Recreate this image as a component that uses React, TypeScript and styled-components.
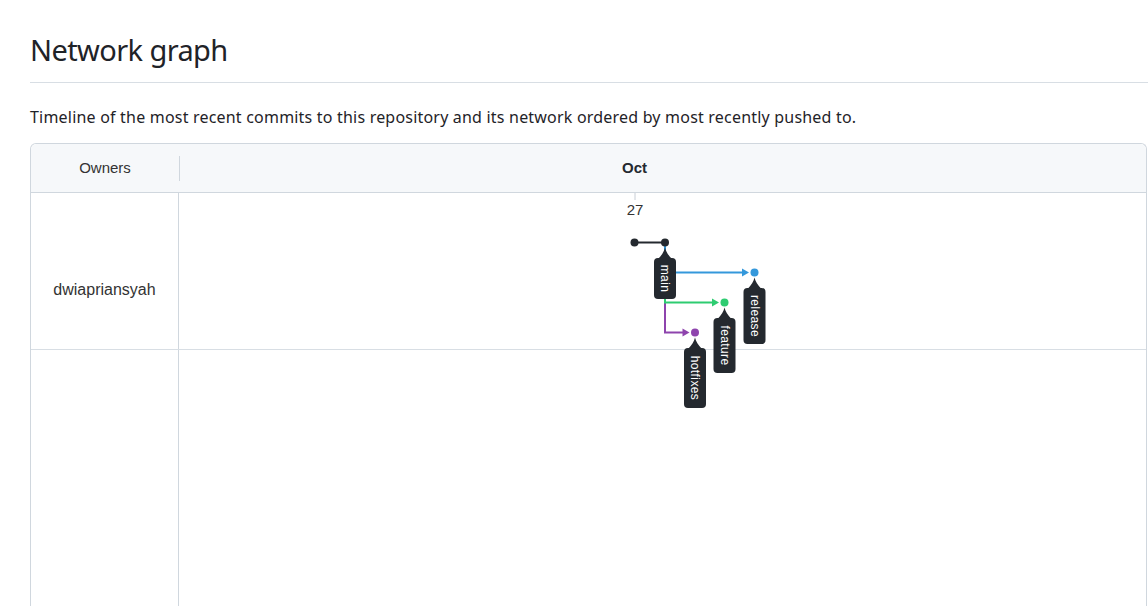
import React from "react";
import styled, { createGlobalStyle } from "styled-components";

const Global = createGlobalStyle`
  html, body { margin: 0; padding: 0; background: #ffffff; }
  body { font-family: "Noto Sans", "Liberation Sans", sans-serif; color: #1f2328; overflow: hidden; }
`;

const Page = styled.div`
  padding: 30px 0 0 30px;
  width: 1148px;
  box-sizing: border-box;
`;

const Title = styled.h1`
  margin: 0;
  font-family: "Noto Sans", sans-serif;
  font-size: 29px;
  letter-spacing: -0.6px;
  font-weight: 400;
  line-height: 40px;
  padding-bottom: 12px;
  border-bottom: 1px solid #d8dee4;
  color: #1f2328;
`;

const Lead = styled.p`
  margin: 22px 0 14px;
  font-family: "Noto Sans", sans-serif;
  font-size: 16px;
  letter-spacing: 0.2px;
  line-height: 24px;
  color: #1f2328;
`;

const Table = styled.div`
  margin-right: 1px;
  border: 1px solid #d0d7de;
  border-bottom: none;
  border-radius: 6px 6px 0 0;
  font-family: "Liberation Sans", Arial, sans-serif;
  color: #333333;
`;

const Header = styled.div`
  display: grid;
  grid-template-columns: 148px 1fr;
  height: 48px;
  background: #f6f8fa;
  border-bottom: 1px solid #d0d7de;
  border-radius: 6px 6px 0 0;
`;

const HeadCell = styled.div<{ $pad?: number }>`
  display: flex;
  align-items: center;
  justify-content: ${(p) => (p.$pad !== undefined ? "flex-start" : "center")};
  padding-left: ${(p) => p.$pad ?? 0}px;
  font-size: 15px;
  line-height: 20px;
  position: relative;
`;

const HeadDivider = styled.span`
  position: absolute;
  right: -1px;
  top: 12px;
  width: 1px;
  height: 25px;
  background: #d0d7de;
`;

const Month = styled.span`
  font-weight: 700;
  color: #24292f;
`;

const Body = styled.div`
  position: relative;
`;

const Row = styled.div<{ $height: number; $last?: boolean }>`
  display: grid;
  grid-template-columns: 148px 1fr;
  height: ${(p) => p.$height}px;
  border-bottom: ${(p) => (p.$last ? "none" : "1px solid #d8dee4")};
`;

const OwnerCell = styled.div<{ $top?: number }>`
  border-right: 1px solid #d0d7de;
  display: flex;
  justify-content: center;
  align-items: flex-start;
  padding-top: ${(p) => p.$top ?? 0}px;
  font-size: 16px;
  line-height: 20px;
  color: #333333;
`;

const GraphCell = styled.div``;

const GraphLayer = styled.svg`
  position: absolute;
  left: 149px;
  top: 0;
  overflow: visible;
  pointer-events: none;
`;

type Branch = { name: string; color: string; x: number; y: number; h: number };

const MAIN_X = 485;
const ROOT_Y = 49.5;

const branches: Branch[] = [
  { name: "hotfixes", color: "#8e44ad", x: 515, y: 139.5, h: 60 },
  { name: "feature", color: "#2ecc71", x: 544.5, y: 109.5, h: 55 },
  { name: "release", color: "#3498db", x: 574.5, y: 79.5, h: 56 },
];

const LABEL_BG = "#24292f";

function Label({ x, y, h, text }: { x: number; y: number; h: number; text: string }) {
  const top = y + 15.5;
  const tip = y + 5;
  return (
    <g>
      <path
        d={`M${x} ${tip} C${x + 1} ${tip + 4} ${x + 3} ${top - 3} ${x + 7} ${top + 1} L${x - 7} ${top + 1} C${x - 3} ${top - 3} ${x - 1} ${tip + 4} ${x} ${tip} Z`}
        fill={LABEL_BG}
      />
      <rect x={x - 11} y={top} width={22} height={h} rx={4} fill={LABEL_BG} />
      <text
        x={0}
        y={0}
        transform={`translate(${x} ${top + h / 2}) rotate(90)`}
        textAnchor="middle"
        dominantBaseline="central"
        fill="#ffffff"
        fontFamily="'Liberation Sans', Arial, sans-serif"
        fontSize={12}
        letterSpacing={0.4}
      >
        {text}
      </text>
    </g>
  );
}

function Graph() {
  return (
    <GraphLayer width={968} height={260}>
      <line x1={455} y1={0} x2={455} y2={7} stroke="#c8ced6" strokeWidth={1} />
      <text
        x={455}
        y={22}
        textAnchor="middle"
        fontFamily="'Liberation Sans', Arial, sans-serif"
        fontSize={15}
        fill="#333333"
      >
        27
      </text>
      {branches.map((b) => (
        <g key={b.name}>
          <path
            d={`M${MAIN_X} ${ROOT_Y} V${b.y} H${b.x - 12}`}
            fill="none"
            stroke={b.color}
            strokeWidth={2}
          />
          <path
            d={`M${b.x - 12.5} ${b.y - 4} L${b.x - 5.5} ${b.y} L${b.x - 12.5} ${b.y + 4} Z`}
            fill={b.color}
          />
          <circle cx={b.x} cy={b.y} r={4} fill={b.color} />
        </g>
      ))}
      <line x1={454.5} y1={ROOT_Y} x2={MAIN_X} y2={ROOT_Y} stroke="#24292f" strokeWidth={2} />
      <circle cx={454.5} cy={ROOT_Y} r={4} fill="#24292f" />
      <circle cx={MAIN_X} cy={ROOT_Y} r={4} fill="#24292f" />
      <Label x={MAIN_X} y={ROOT_Y} h={41} text="main" />
      {branches.map((b) => (
        <Label key={b.name} x={b.x} y={b.y} h={b.h} text={b.name} />
      ))}
    </GraphLayer>
  );
}

export default function App() {
  return (
    <>
      <Global />
      <Page>
        <Title>Network graph</Title>
        <Lead>
          Timeline of the most recent commits to this repository and its network ordered by most
          recently pushed to.
        </Lead>
        <Table>
          <Header>
            <HeadCell>
              Owners
              <HeadDivider />
            </HeadCell>
            <HeadCell $pad={443}>
              <Month>Oct</Month>
            </HeadCell>
          </Header>
          <Body>
            <Row $height={156}>
              <OwnerCell $top={87}>dwiapriansyah</OwnerCell>
              <GraphCell />
            </Row>
            <Row $height={320} $last>
              <OwnerCell />
              <GraphCell />
            </Row>
            <Graph />
          </Body>
        </Table>
      </Page>
    </>
  );
}
